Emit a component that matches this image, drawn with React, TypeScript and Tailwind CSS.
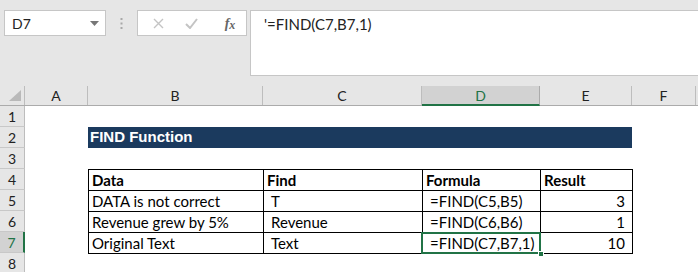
import React from "react";

const cols = [
  { k: "A", w: 63 },
  { k: "B", w: 175 },
  { k: "C", w: 159 },
  { k: "D", w: 118 },
  { k: "E", w: 92 },
  { k: "F", w: 64 },
];

const cellFont = { fontFamily: "Lato, 'Open Sans', sans-serif" };

function RowHead({ n, sel }: { n: number; sel?: boolean }) {
  return (
    <div
      className={`w-[25px] shrink-0 h-[21px] flex items-center justify-center text-[14px] border-b border-[#c8c8c8] ${
        sel ? "bg-[#d2d2d2] text-[#217346] border-r-[2px] border-r-[#217346]" : "bg-[#e6e6e6] text-[#222] border-r border-r-[#bdbdbd]"
      }`}
      style={cellFont}
    >
      {n}
    </div>
  );
}

export default function App() {
  return (
    <div className="w-[698px] h-[272px] overflow-hidden bg-white select-none" style={cellFont}>
      {/* top formula area */}
      <div className="h-[86px] bg-[#e6e6e6] flex items-start pt-[10px] pl-[4px]">
        <div className="w-[102px] h-[26px] bg-white border border-[#c6c6c6] flex items-center pl-[7px] pr-[6px]">
          <span className="text-[14px] text-[#222] flex-1">D7</span>
          <svg width="9" height="5" viewBox="0 0 9 5">
            <path d="M0 0 L9 0 L4.5 5 Z" fill="#777" />
          </svg>
        </div>
        <div className="w-[31px] h-[26px] flex items-center justify-center">
          <svg width="3" height="11" viewBox="0 0 3 11">
            <rect x="0.5" y="0" width="2" height="2" fill="#a8a8a8" />
            <rect x="0.5" y="4.5" width="2" height="2" fill="#a8a8a8" />
            <rect x="0.5" y="9" width="2" height="2" fill="#a8a8a8" />
          </svg>
        </div>
        <div className="w-[110px] h-[26px] bg-white border border-[#c6c6c6] flex items-center">
          <div className="w-[37px] flex justify-center pl-[4px]">
            <svg width="11" height="11" viewBox="0 0 11 11">
              <path d="M1 1 L10 10 M10 1 L1 10" stroke="#c4c4c4" strokeWidth="1.4" />
            </svg>
          </div>
          <div className="w-[33px] flex justify-center">
            <svg width="13" height="11" viewBox="0 0 13 11">
              <path d="M1 6 L5 10 L12 1" stroke="#c4c4c4" strokeWidth="2" fill="none" />
            </svg>
          </div>
          <div
            className="flex-1 flex justify-center text-[14px] italic font-bold text-[#666] pl-[6px]"
            style={{ fontFamily: "'Liberation Serif', serif" }}
          >
            <span>f</span>
            <span className="text-[12px] mt-[3px]">x</span>
          </div>
        </div>
        <div className="ml-[3px] flex-1 h-[66px] bg-white border-t border-b border-l border-[#c6c6c6] pl-[13px] pt-[2px] text-[15px] text-[#222]">
          '=FIND(C7,B7,1)
        </div>
      </div>

      {/* column headers */}
      <div className="flex h-[20px] bg-[#e6e6e6] border-b border-[#ababab]">
        <div className="w-[25px] shrink-0 relative border-r border-[#bdbdbd]">
          <svg className="absolute right-[3px] bottom-[4px]" width="12" height="11" viewBox="0 0 12 11">
            <path d="M12 0 L12 11 L0 11 Z" fill="#b9b9b9" />
          </svg>
        </div>
        {cols.map((c) => (
          <div
            key={c.k}
            className={`shrink-0 flex items-center justify-center text-[14px] ${
              c.k === "D"
                ? "bg-[#d2d2d2] text-[#217346] border-r border-[#ababab] border-b-[2px] border-b-[#217346] -mb-[1px]"
                : "text-[#222] border-r border-[#bdbdbd]"
            }`}
            style={{ width: c.w }}
          >
            {c.k}
          </div>
        ))}
        <div className="flex-1" />
      </div>

      {/* body */}
      <div className="flex">
        <div className="flex flex-col">
          {[1, 2, 3, 4, 5, 6, 7, 8].map((n) => (
            <RowHead key={n} n={n} sel={n === 7} />
          ))}
        </div>
        <div className="flex-1 flex flex-col pl-[63px] pt-[21px]">
          {/* title */}
          <div
            className="w-[544px] h-[21px] bg-[#1b3a5e] text-white font-bold text-[15px] flex items-center pl-[2px]"
            style={{ fontFamily: "'Liberation Sans', Arial, sans-serif" }}
          >
            FIND Function
          </div>
          <div className="h-[21px]" />
          {/* table */}
          <div className="w-[545px] border-t border-l border-black text-[15px] text-black">
            {[
              ["Data", "Find", "Formula", "Result", true],
              ["DATA is not correct", "T", "=FIND(C5,B5)", "3", false],
              ["Revenue grew by 5%", "Revenue", "=FIND(C6,B6)", "1", false],
              ["Original Text", "Text", "=FIND(C7,B7,1)", "10", false],
            ].map((r, i) => {
              const head = r[4] as boolean;
              return (
                <div key={i} className={`flex h-[21px] ${head ? "font-bold" : ""}`}>
                  <div className="w-[175px] border-r border-b border-black flex items-center pl-[3px] leading-none">
                    {r[0] as string}
                  </div>
                  <div className={`w-[159px] border-r border-b border-black flex items-center leading-none ${head ? "pl-[3px]" : "pl-[7px]"}`}>
                    {r[1] as string}
                  </div>
                  <div
                    className={`w-[118px] border-r border-b border-black flex items-center leading-none relative ${head ? "pl-[3px]" : "pl-[7px]"}`}
                  >
                    {r[2] as string}
                    {i === 3 && (
                      <>
                        <div className="absolute -left-[2px] -top-[1px] w-[120px] h-[22px] border-[2px] border-[#217346]" />
                        <div className="absolute -right-[4px] -bottom-[4px] w-[6px] h-[6px] bg-[#217346] border border-white" />
                      </>
                    )}
                  </div>
                  <div className={`w-[92px] border-r border-b border-black flex items-center leading-none ${head ? "pl-[3px]" : "justify-end pr-[7px]"}`}>
                    {r[3] as string}
                  </div>
                </div>
              );
            })}
          </div>
        </div>
      </div>
    </div>
  );
}
